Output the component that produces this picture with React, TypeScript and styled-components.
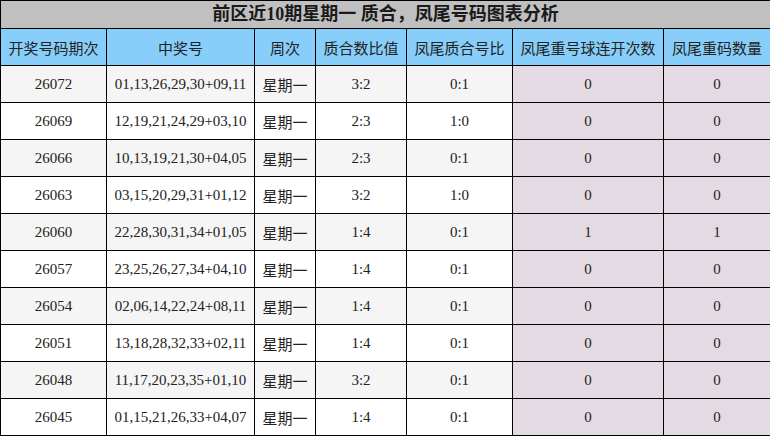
import React from "react";
import styled, { createGlobalStyle } from "styled-components";

const Global = createGlobalStyle`
  html, body { margin: 0; padding: 0; background: #fff; }
  body { font-family: "Liberation Serif", "Noto Sans CJK SC", serif; }
`;

const Table = styled.table`
  width: 770px;
  border-collapse: collapse;
  table-layout: fixed;
  font-family: "Liberation Serif", "Noto Sans CJK SC", serif;
  color: #222;
`;

const TitleCell = styled.th`
  height: 27px;
  padding: 0;
  background: #c0c0c0;
  border: 1px solid #000;
  font-size: 18px;
  font-weight: bold;
  color: #1a1a1a;
  text-align: center;
  line-height: 27px;
`;

const HeadCell = styled.th`
  height: 36px;
  padding: 0;
  background: #87cefa;
  border: 1px solid #000;
  font-size: 15px;
  font-weight: normal;
  text-align: center;
  white-space: nowrap;
`;

const Cell = styled.td<{ $alt: boolean; $tail?: boolean }>`
  height: 36px;
  padding: 0;
  border: 1px solid #000;
  font-size: 15px;
  text-align: center;
  white-space: nowrap;
  background: ${(p) => (p.$tail ? "#e4dae4" : p.$alt ? "#f5f5f5" : "#ffffff")};
`;

const widths = [106, 148, 61, 91, 106, 151, 107];
const headers = ["开奖号码期次", "中奖号", "周次", "质合数比值", "凤尾质合号比", "凤尾重号球连开次数", "凤尾重码数量"];

const rows: string[][] = [
  ["26072", "01,13,26,29,30+09,11", "星期一", "3:2", "0:1", "0", "0"],
  ["26069", "12,19,21,24,29+03,10", "星期一", "2:3", "1:0", "0", "0"],
  ["26066", "10,13,19,21,30+04,05", "星期一", "2:3", "0:1", "0", "0"],
  ["26063", "03,15,20,29,31+01,12", "星期一", "3:2", "1:0", "0", "0"],
  ["26060", "22,28,30,31,34+01,05", "星期一", "1:4", "0:1", "1", "1"],
  ["26057", "23,25,26,27,34+04,10", "星期一", "1:4", "0:1", "0", "0"],
  ["26054", "02,06,14,22,24+08,11", "星期一", "1:4", "0:1", "0", "0"],
  ["26051", "13,18,28,32,33+02,11", "星期一", "1:4", "0:1", "0", "0"],
  ["26048", "11,17,20,23,35+01,10", "星期一", "3:2", "0:1", "0", "0"],
  ["26045", "01,15,21,26,33+04,07", "星期一", "1:4", "0:1", "0", "0"],
];

export default function App() {
  return (
    <>
      <Global />
      <Table>
        <colgroup>
          {widths.map((w, i) => (
            <col key={i} style={{ width: w }} />
          ))}
        </colgroup>
        <thead>
          <tr>
            <TitleCell colSpan={7}>前区近10期星期一 质合，凤尾号码图表分析</TitleCell>
          </tr>
          <tr>
            {headers.map((h) => (
              <HeadCell key={h}>{h}</HeadCell>
            ))}
          </tr>
        </thead>
        <tbody>
          {rows.map((r, i) => (
            <tr key={r[0]}>
              {r.map((c, j) => (
                <Cell key={j} $alt={i % 2 === 0} $tail={j >= 5}>
                  {c}
                </Cell>
              ))}
            </tr>
          ))}
        </tbody>
      </Table>
    </>
  );
}
